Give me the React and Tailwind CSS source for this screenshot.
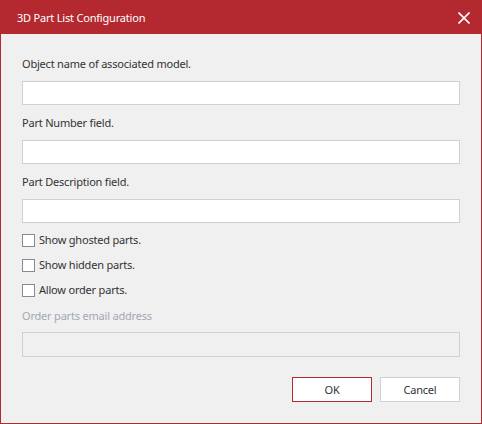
import React from "react";

const fields = ["Object name of associated model.", "Part Number field.", "Part Description field."];
const checks = ["Show ghosted parts.", "Show hidden parts.", "Allow order parts."];

const App = () => {
  return (
    <div
      className="w-[482px] h-[424px] flex flex-col bg-[#f0f0f0] text-[11px] leading-[16px] tracking-[-0.2px] text-[#333333]"
      style={{ fontFamily: '"Segoe UI", "Noto Sans", sans-serif' }}
    >
      {/* title bar */}
      <div className="h-[34px] shrink-0 bg-[#b3292f] flex items-center justify-between pl-[17px] pr-[12px] pt-[2px]">
        <span className="text-white">3D Part List Configuration</span>
        <svg width="12" height="12" viewBox="0 0 12 12" className="text-white">
          <path d="M0.5 0.5 L11.5 11.5 M11.5 0.5 L0.5 11.5" stroke="currentColor" strokeWidth="1.6" />
        </svg>
      </div>

      {/* body */}
      <div className="flex-1 flex flex-col border-x border-b border-[#b3292f] px-[21px] pt-[22px]">
        {fields.map((label) => (
          <div key={label} className="flex flex-col mb-[10px]">
            <label className="mb-[9px]">{label}</label>
            <input className="h-[24px] bg-white border border-[#cfd1d6] outline-none px-2" />
          </div>
        ))}

        {checks.map((label) => (
          <div key={label} className="flex items-center gap-[4px] h-[14px] mb-[11px]">
            <span className="w-[13px] h-[13px] border border-[#868a93] bg-white shrink-0" />
            <span>{label}</span>
          </div>
        ))}

        <label className="text-[#a3a8b1] mb-[8px]">Order parts email address</label>
        <div className="h-[25px] border border-[#cfd1d6] bg-[#f0f0f0]" />

        <div className="flex justify-end gap-[8px] mt-[20px]">
          <button className="w-[80px] h-[25px] bg-white border border-[#b3292f] text-[#333333]">OK</button>
          <button className="w-[80px] h-[25px] bg-white border border-[#cfd1d6] text-[#333333]">Cancel</button>
        </div>
      </div>
    </div>
  );
};

export default App;
